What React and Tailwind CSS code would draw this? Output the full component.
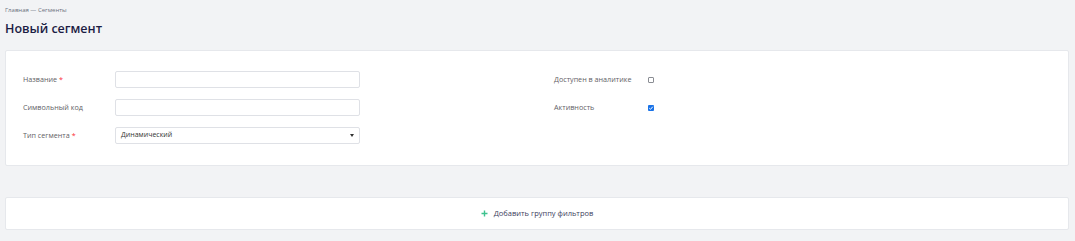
import React, { useState } from "react";

function Field({ label, required, children }) {
  return (
    <div className="flex items-center h-[17px]">
      <label className="w-[92px] text-[7.2px] text-[#5f6166] leading-none">
        {label}
        {required && <span className="text-red-500 ml-[2px]">*</span>}
      </label>
      {children}
    </div>
  );
}

function Check({ checked, onClick }) {
  return (
    <button
      onClick={onClick}
      className={
        checked
          ? "w-[6px] h-[6px] rounded-[1px] bg-[#1a73e8] flex items-center justify-center"
          : "w-[6px] h-[6px] rounded-[1px] border border-[#8a8d93] bg-white"
      }
    >
      {checked && (
        <svg viewBox="0 0 6 6" className="w-[6px] h-[6px]">
          <path d="M1.3 3.2 L2.5 4.3 L4.8 1.7" stroke="white" strokeWidth="1" fill="none" />
        </svg>
      )}
    </button>
  );
}

export default function App() {
  const [analytics, setAnalytics] = useState(false);
  const [active, setActive] = useState(true);

  return (
    <div
      className="w-[1075px] h-[241px] bg-[#f2f3f5] px-[5px] pt-[6px]"
      style={{ fontFamily: '"Open Sans", "Noto Sans", sans-serif' }}
    >
      <div className="text-[6px] text-[#6b7280] leading-[8px]">Главная — Сегменты</div>
      <h1 className="mt-[6px] text-[12.5px] font-semibold text-[#1c1c44] leading-[18px]">
        Новый сегмент
      </h1>

      <div className="mt-[12px] w-[1064px] h-[116px] bg-white border border-[#e6e8ec] rounded-[2px] pl-[17px] pt-[20px] flex">
        <div className="flex flex-col gap-[11px] w-[337px]">
          <Field label="Название" required>
            <input className="w-[245px] h-[17px] border border-[#dfe1e6] rounded-[2px] outline-none" />
          </Field>
          <Field label="Символьный код">
            <input className="w-[245px] h-[17px] border border-[#dfe1e6] rounded-[2px] outline-none" />
          </Field>
          <Field label="Тип сегмента" required>
            <div className="w-[245px] h-[17px] border border-[#dfe1e6] rounded-[2px] flex items-center justify-between pl-[5px] pr-[5px]">
              <span className="text-[7px] text-[#333]">Динамический</span>
              <span className="w-0 h-0 border-l-[2.5px] border-r-[2.5px] border-t-[3px] border-l-transparent border-r-transparent border-t-[#333]" />
            </div>
          </Field>
        </div>
        <div className="ml-[194px] flex flex-col gap-[11px]">
          <div className="flex items-center h-[17px]">
            <span className="w-[94px] text-[7.2px] text-[#5f6166] leading-none">Доступен в аналитике</span>
            <Check checked={analytics} onClick={() => setAnalytics(!analytics)} />
          </div>
          <div className="flex items-center h-[17px]">
            <span className="w-[94px] text-[7.2px] text-[#5f6166] leading-none">Активность</span>
            <Check checked={active} onClick={() => setActive(!active)} />
          </div>
        </div>
      </div>

      <div className="mt-[31px] w-[1064px] h-[33px] bg-white border border-[#e6e8ec] rounded-[2px] flex items-center justify-center gap-[6px]">
        <svg viewBox="0 0 7 7" className="w-[7px] h-[7px]">
          <path d="M3.5 0.5 V6.5 M0.5 3.5 H6.5" stroke="#3ec28f" strokeWidth="1.4" />
        </svg>
        <span className="text-[7.5px] text-[#3d3d5c]">Добавить группу фильтров</span>
      </div>
    </div>
  );
}
